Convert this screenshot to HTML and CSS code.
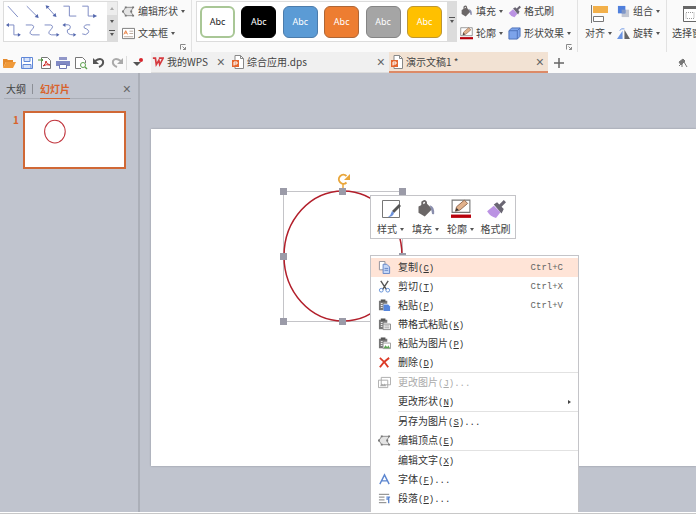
FILE: index.html
```
<!DOCTYPE html>
<html lang="zh-CN">
<head>
    <meta charset="UTF-8">
    <meta name="viewport" content="width=device-width, initial-scale=1.0">
    <title>WPS 演示</title>
    <link rel="stylesheet" href="styles.css">
</head>
<body>
    <!-- Shared icons -->
    <svg class="sprite" aria-hidden="true">
        <symbol id="i-points" viewBox="0 0 14 12">
            <path d="M4 1.5h8L9.5 6l2.500 4.500H4L1 6z" fill="#e4e4e4" stroke="#888"/>
            <path d="M3 .5h2v2H3zM11 .5h2v2h-2zM0 5h2v2H0zM9 5h2v2H9zM3 9.500h2v2H3zM11 9.500h2v2h-2z" fill="#777"/>
        </symbol>
        <symbol id="i-bucket" viewBox="0 0 16 16">
            <path d="M2 6l6-3 5 5-6 6-5-3z" fill="#6b6767"/>
            <path d="M5 7V2.500q2-2 3 0V7" fill="none" stroke="#6b6767" stroke-width="1.500"/>
            <path d="M11 5q4 1 3.500 7-2 1-2-2z" fill="#8b8fae"/>
        </symbol>
        <symbol id="i-brush" viewBox="0 0 18 18">
            <path d="M1 11l6-5 6 6-4 5q-5-1-8-6z" fill="#bb93e3"/>
            <path d="M7 5l3-2 2 2 4-4 2 2-4 4 2 2-2 4z" fill="#6a6673"/>
        </symbol>
        <symbol id="i-outline" viewBox="0 0 18 18">
            <path d="M1 1h16v11H1z" fill="#fff" stroke="#777"/>
            <path d="M4 11l1-4 7-6 3 3-7 6z" fill="#e2b28c" stroke="#8a6149" stroke-width=".8"/>
            <path d="M4 11l1-3 2 2z" fill="#333"/>
            <path d="M0 14h18v3H0z" fill="#b8000c"/>
        </symbol>
        <symbol id="i-ppt" viewBox="0 0 12 14">
            <path d="M3 .5h5.500l3 3v10H3z" fill="#fff" stroke="#888"/>
            <path d="M8.500.5v3h3" fill="none" stroke="#888"/>
            <path d="M0 5h7v7H0z" fill="#e4662f"/>
            <path d="M2 10.500V7h3v2H2" fill="none" stroke="#fff"/>
        </symbol>
        <symbol id="i-paste" viewBox="0 0 14 14">
            <path d="M1 2h9v3H6v7H1z" fill="#777"/>
            <path d="M3 .5h5v2.500H3z" fill="#555"/>
            <path d="M3 5h2M3 7h2M3 9h2" stroke="#fff"/>
        </symbol>
        <symbol id="i-launch" viewBox="0 0 6 6">
            <path d="M.5 5.500v-5h5M2.500 2.500l3 3M5.500 3v2.500H3" fill="none" stroke="#888"/>
        </symbol>
    </svg>

    <header class="ribbon">
        <div class="gallery shapes">
            <svg class="shape-list" viewBox="0 0 104 39" role="img" aria-label="线条">
                <g fill="none" stroke="#7f8dc4">
                    <path d="M4 4l10 11M23 4l11 11M43 4l8 9M60 4h6v10h7M79 4h6v10h6"/>
                    <path d="M4 23h6v10h6M22 23h6q4 1 0 5t1 5h7M41 23h6q4 1 0 5t1 5h6M61 23q6-1 6 2t-3 3q-1 5 6 5M87 23q-7-1-6 3 6 2 4 5-2 3-6 1"/>
                </g>
                <path d="M35 16l-4-1 3-3zM42 3l4 1-3 3zM53 15l-4-1 3-3zM94 14l-4-2v4zM2 23l3-2v4zM17 33l-3-2v4zM56 33l-3-2v4zM59 23l3-2v4zM73 33l-3-2v4z" fill="#5266ad"/>
            </svg>
            <div class="scroller">
                <button aria-label="向上" class="off"><i class="caret up"></i></button>
                <button aria-label="向下"><i class="caret"></i></button>
                <button aria-label="更多"><i class="caret more"></i></button>
            </div>
        </div>

        <div class="group edit">
            <button class="tool"><svg class="icon"><use href="#i-points"/></svg>编辑形状<i class="caret"></i></button>
            <button class="tool">
                <svg class="icon" viewBox="0 0 14 12"><path d="M.5.5h13v11H.5z" fill="#fff" stroke="#777"/><path d="M2 7l2-4 2 4M3 5.500h2" fill="none" stroke="#e87836"/><path d="M8 3.500h4M8 6h4M2 9.500h10" stroke="#b9a79c"/></svg>文本框<i class="caret"></i>
            </button>
            <button class="launch" aria-label="设置"><svg><use href="#i-launch"/></svg></button>
        </div>

        <div class="gallery styles">
            <div class="swatches">
                <button class="swatch white">Abc</button>
                <button class="swatch black">Abc</button>
                <button class="swatch blue">Abc</button>
                <button class="swatch orange">Abc</button>
                <button class="swatch gray">Abc</button>
                <button class="swatch yellow">Abc</button>
            </div>
            <button class="more-styles" aria-label="更多样式"><i class="caret more"></i></button>
        </div>

        <div class="group format">
            <div class="tool-grid">
                <button class="tool"><svg class="icon"><use href="#i-bucket"/></svg>填充<i class="caret"></i></button>
                <button class="tool"><svg class="icon"><use href="#i-brush"/></svg>格式刷</button>
                <button class="tool"><svg class="icon"><use href="#i-outline"/></svg>轮廓<i class="caret"></i></button>
                <button class="tool">
                    <svg class="icon" viewBox="0 0 14 14"><path d="M1 4l3-3h9v9l-3 3H1z" fill="#7ca3ea" stroke="#4c6fb8"/><path d="M1 4h9v9M10 4l3-3" fill="none" stroke="#4c6fb8"/></svg>形状效果<i class="caret"></i>
                </button>
            </div>
            <button class="launch" aria-label="设置"><svg><use href="#i-launch"/></svg></button>
        </div>

        <div class="group arrange">
            <button class="tool tall">
                <svg viewBox="0 0 18 18"><path d="M1.500 0v18" stroke="#777"/><path d="M3 1h15v7H3z" fill="#f2b04a"/><path d="M3.500 11.500h10v5h-10z" fill="#fff" stroke="#777"/></svg>
                <span>对齐<i class="caret"></i></span>
            </button>
            <div>
                <button class="tool">
                    <svg class="icon" viewBox="0 0 14 14"><path d="M5 5h8v8H5z" fill="#c3c7d2"/><path d="M1 1h8v8H1z" fill="#4f7fdc"/><path d="M5 5h4v4H5z" fill="#8096c4"/></svg>组合<i class="caret"></i>
                </button>
                <button class="tool">
                    <svg class="icon" viewBox="0 0 14 14"><path d="M6 4v9H0z" fill="#6b95e4"/><path d="M8 3l6 10H8z" fill="#666"/><path d="M3 4q1-3 5-2" fill="none" stroke="#6b95e4"/></svg>旋转<i class="caret"></i>
                </button>
            </div>
        </div>

        <div class="group select">
            <button class="tool tall">
                <svg viewBox="0 0 18 18"><path d="M.5 1.500h17v15H.5z" fill="#fff" stroke="#666"/><path d="M0 1h18v3H0z" fill="#666"/><path d="M3 7.500h8v6H3z" fill="none" stroke="#999" stroke-dasharray="1"/><path d="M13 9h5v7h-5z" fill="#5c8de0"/></svg>
                <span>选择窗格</span>
            </button>
        </div>
    </header>

    <nav class="tabbar">
        <div class="quick">
            <button aria-label="打开"><svg viewBox="0 0 14 14"><path d="M1 12V3h4l1 1h5v2H4z" fill="#e58a2c"/><path d="M4 6h10l-3 6H1z" fill="#f09a3a"/></svg></button>
            <button aria-label="保存"><svg viewBox="0 0 14 14"><path d="M1.500 1.500h11v11h-11z" fill="#fff" stroke="#5f87d8"/><path d="M4 1.500h6v4H4zM3 8.500h8v4H3z" fill="#d7e3fa" stroke="#5f87d8"/></svg></button>
            <button aria-label="输出为PDF"><svg viewBox="0 0 14 14"><path d="M3.500 1.500h6l3 3v8h-9z" fill="#fff" stroke="#777"/><path d="M5 10q3-2 3-5 0 3 4 4-4-1-7 1z" fill="none" stroke="#d0322e"/><path d="M0 4h5M3 2l2 2-2 2" fill="none" stroke="#579a45"/></svg></button>
            <button aria-label="打印"><svg viewBox="0 0 14 14"><path d="M3 1h8v3H3z" fill="#9298c9"/><path d="M0 5h14v5H0z" fill="#8089c4"/><path d="M3.500 8.500h7v4h-7z" fill="#fff" stroke="#6e76b2"/></svg></button>
            <button aria-label="打印预览"><svg viewBox="0 0 14 14"><path d="M11.500 7V4.500l-3-3h-7v11H7" fill="#fff" stroke="#777"/><circle cx="9" cy="9" r="2.500" fill="#fff" stroke="#5ca04e"/><path d="M11 11l2 2" stroke="#5ca04e" stroke-width="1.500"/></svg></button>
            <button aria-label="撤销"><svg viewBox="0 0 14 14"><path d="M3 5q6-4 8 0 1 4-4 6" fill="none" stroke="#555" stroke-width="2"/><path d="M1 2v6h6z" fill="#555"/></svg></button>
            <button aria-label="恢复"><svg viewBox="0 0 14 14"><path d="M11 5q-6-4-8 0-1 4 4 6" fill="none" stroke="#aaa" stroke-width="2"/><path d="M13 2v6H7z" fill="#aaa"/></svg></button>
        </div>
        <button class="notify" aria-label="更多"><svg viewBox="0 0 14 14"><path d="M1 6h8l-4 4z" fill="#555"/><circle cx="9" cy="4" r="2" fill="#d7262e"/></svg></button>
        <div class="tab home">
            <svg viewBox="0 0 14 12"><path d="M1 1.500h3L5 9l3-5 1 5 4-7.500H8" fill="none" stroke="#d63a3f" stroke-width="2"/></svg>
            <a href="#">我的WPS</a>
            <button class="close" aria-label="关闭">×</button>
        </div>
        <div class="tab doc">
            <svg><use href="#i-ppt"/></svg>
            <a href="#">综合应用.dps</a>
            <button class="close" aria-label="关闭">×</button>
        </div>
        <div class="tab doc active">
            <svg><use href="#i-ppt"/></svg>
            <a href="#">演示文稿1 *</a>
            <button class="close" aria-label="关闭">×</button>
        </div>
        <button class="add" aria-label="新建"><svg viewBox="0 0 10 10"><path d="M5 0v10M0 5h10" stroke="#666" stroke-width="1.500"/></svg></button>
        <button class="skin" aria-label="皮肤"><svg viewBox="0 0 10 10"><path d="M1 4l4-3 2 2-4 4zM4 3v6M6 4l3 5M1 8l2-2" fill="#777" stroke="#777"/></svg></button>
    </nav>

    <main class="workspace">
        <aside class="panel">
            <div class="panel-tabs">
                <a href="#">大纲</a>
                <span class="bar"></span>
                <a href="#" class="current">幻灯片</a>
                <button class="close" aria-label="关闭">×</button>
            </div>
            <div class="thumb-row">
                <span class="number">1</span>
                <div class="thumb">
                    <svg viewBox="0 0 96 52" role="img" aria-label="幻灯片 1"><ellipse cx="29" cy="18" rx="10" ry="11" fill="none" stroke="#c0343c"/></svg>
                </div>
            </div>
        </aside>

        <section class="canvas">
            <div class="slide"></div>
            <svg class="selection" viewBox="0 0 128 154" role="img" aria-label="椭圆">
                <path d="M4.500 20.500h119v130h-119z" fill="none" stroke="#c4c4c8"/>
                <ellipse cx="64" cy="85" rx="59" ry="65" fill="none" stroke="#b21f2b" stroke-width="1.500"/>
                <path d="M64 13v6" stroke="#e9a63b" stroke-width="1.500"/>
                <path d="M67.500 11.500a4.500 4.500 0 1 1 0-6.500" fill="none" stroke="#e9a63b" stroke-width="2"/>
                <path d="M71 3v6h-6z" fill="#e9a63b"/>
                <path d="M1 17h7v7H1zM60 17h7v7h-7zM120 17h7v7h-7zM1 82h7v7H1zM120 82h7v7h-7zM1 147h7v7H1zM60 147h7v7h-7zM120 147h7v7h-7z" fill="#9b9ba8"/>
            </svg>

            <div class="minibar">
                <button>
                    <svg viewBox="0 0 20 20"><path d="M1.500 1.500h17v17h-17z" fill="#fff" stroke="#777"/><path d="M18 5l2 2-7 7-2-2z" fill="#555"/><path d="M11 12l2 2q-1 4-6 4 3-2 4-6z" fill="#6d92dc"/></svg>
                    <span>样式<i class="caret"></i></span>
                </button>
                <button>
                    <svg><use href="#i-bucket"/></svg>
                    <span>填充<i class="caret"></i></span>
                </button>
                <button>
                    <svg><use href="#i-outline"/></svg>
                    <span>轮廓<i class="caret"></i></span>
                </button>
                <button>
                    <svg><use href="#i-brush"/></svg>
                    <span>格式刷</span>
                </button>
            </div>

            <div class="menu">
                <button class="item hover">
                    <svg viewBox="0 0 14 14"><path d="M1.500.5h6v9h-6z" fill="#fff" stroke="#8c8c96"/><path d="M5.500 3.500h4l3 3v7h-7z" fill="#c5d7f7" stroke="#6284c6"/><path d="M7 8h4M7 10h4" stroke="#6284c6"/></svg>
                    <span>复制<kbd>(<u>C</u>)</kbd></span><kbd class="shortcut">Ctrl+C</kbd>
                </button>
                <button class="item">
                    <svg viewBox="0 0 14 14"><path d="M3 1l6 9M11 1L5 10" stroke="#555" stroke-width="1.500"/><circle cx="3.500" cy="11" r="2" fill="none" stroke="#5c8bd6"/><circle cx="10.500" cy="11" r="2" fill="none" stroke="#5c8bd6"/></svg>
                    <span>剪切<kbd>(<u>T</u>)</kbd></span><kbd class="shortcut">Ctrl+X</kbd>
                </button>
                <button class="item">
                    <svg viewBox="0 0 14 14"><use href="#i-paste"/><path d="M6 6h5l2 2v5H6z" fill="#5686dc"/></svg>
                    <span>粘贴<kbd>(<u>P</u>)</kbd></span><kbd class="shortcut">Ctrl+V</kbd>
                </button>
                <button class="item">
                    <svg viewBox="0 0 14 14"><use href="#i-paste"/><path d="M5.500 6.500h8v6h-8z" fill="#eee" stroke="#888"/><path d="M7 8.500h5M7 10.500h5" stroke="#aaa"/></svg>
                    <span>带格式粘贴<kbd>(<u>K</u>)</kbd></span>
                </button>
                <button class="item">
                    <svg viewBox="0 0 14 14"><use href="#i-paste"/><path d="M5.500 6.500h8v6h-8z" fill="#fff" stroke="#999"/><path d="M6 12l2-3 2 2 1-2 2 3z" fill="#5da654"/></svg>
                    <span>粘贴为图片<kbd>(<u>P</u>)</kbd></span>
                </button>
                <button class="item">
                    <svg viewBox="0 0 14 14"><path d="M2 2q5 4 9 10M12 2Q6 6 2 12" fill="none" stroke="#dc3a26" stroke-width="2"/></svg>
                    <span>删除<kbd>(<u>D</u>)</kbd></span>
                </button>
                <hr>
                <button class="item" disabled>
                    <svg viewBox="0 0 14 14"><path d="M3.500 1.500h10v8h-10zM.5 4.500h10v8H.5z" fill="#fff" stroke="#aaa"/><path d="M2 11l2-3 2 2 1-2 2 3z" fill="#aaa"/></svg>
                    <span>更改图片<kbd>(<u>J</u>)...</kbd></span>
                </button>
                <button class="item">
                    <i class="blank"></i>
                    <span>更改形状<kbd>(<u>N</u>)</kbd></span><i class="arrow"></i>
                </button>
                <hr>
                <button class="item">
                    <i class="blank"></i>
                    <span>另存为图片<kbd>(<u>S</u>)...</kbd></span>
                </button>
                <button class="item">
                    <svg><use href="#i-points"/></svg>
                    <span>编辑顶点<kbd>(<u>E</u>)</kbd></span>
                </button>
                <hr>
                <button class="item">
                    <i class="blank"></i>
                    <span>编辑文字<kbd>(<u>X</u>)</kbd></span>
                </button>
                <button class="item">
                    <svg viewBox="0 0 14 14"><path d="M2 12L7 2l5 10M4 8.500h6" fill="none" stroke="#5c86d0" stroke-width="1.500"/></svg>
                    <span>字体<kbd>(<u>F</u>)...</kbd></span>
                </button>
                <button class="item">
                    <svg viewBox="0 0 14 14"><path d="M1 2.500h11M1 5.500h6M1 8.500h6M1 11.500h8" stroke="#777"/><path d="M11.500 5v7M9 5.500h4M9 7.500h2" stroke="#5c86d0" stroke-width="1.500"/></svg>
                    <span>段落<kbd>(<u>P</u>)...</kbd></span>
                </button>
            </div>
        </section>
    </main>
    <footer class="status"></footer>
</body>
</html>
```
FILE: styles.css
```
* {
    margin: 0;
    padding: 0;
    box-sizing: border-box;
}

body {
    font-family: "Noto Sans CJK SC", sans-serif;
    font-size: 10px;
    line-height: 14px;
    color: #444;
    background: #fff;
    height: 100vh;
    display: flex;
    flex-direction: column;
    overflow: hidden;
}

button {
    font: inherit;
    color: inherit;
    background: none;
    border: none;
    cursor: pointer;
}

a {
    color: inherit;
    text-decoration: none;
}

svg {
    display: block;
    flex: none;
}

.sprite {
    position: absolute;
    width: 0;
    height: 0;
}

.caret {
    display: inline-block;
    border: 2px solid transparent;
    border-top: 3px solid #555;
    border-bottom: none;
    flex: none;
}

.caret.up {
    transform: rotate(180deg);
}

.caret.more {
    position: relative;
}

.caret.more::before {
    content: '';
    position: absolute;
    left: -3px;
    top: -6px;
    width: 6px;
    height: 1px;
    background: #555;
}

/* Ribbon */
.ribbon {
    display: flex;
    align-items: flex-start;
    height: 52px;
    flex: none;
    background: #fafafa;
    overflow: hidden;
    white-space: nowrap;
}

.gallery {
    display: flex;
    flex: none;
    height: 41px;
    margin-top: 1px;
    background: #fff;
    border: 1px solid #dcdcdc;
}

.shapes {
    width: 115px;
    margin-left: 3px;
}

.shape-list {
    flex: 1;
    height: 39px;
}

.scroller {
    display: grid;
    width: 10px;
}

.scroller button,
.more-styles {
    display: flex;
    align-items: center;
    justify-content: center;
    background: #dcdcdc;
}

.scroller .off {
    opacity: 0.5;
}

.group {
    display: flex;
    flex: none;
    height: 52px;
    border-right: 1px solid #e2e2e2;
}

.edit {
    flex-direction: column;
    width: 74px;
    padding-left: 4px;
}

.tool {
    display: flex;
    align-items: center;
    height: 22px;
    gap: 3px;
}

.icon {
    width: 13px;
    height: 13px;
}

.launch {
    align-self: flex-end;
    margin-right: 5px;
}

.launch svg {
    width: 6px;
    height: 6px;
}

.styles {
    width: 261px;
    margin-left: 4px;
}

.swatches {
    flex: 1;
    display: flex;
    align-items: center;
    justify-content: space-between;
    padding: 0 5px 0 3px;
}

.swatch {
    width: 35px;
    height: 32px;
    border-radius: 6px;
    border: 1px solid;
    color: #fff;
    font-family: "Noto Sans", sans-serif;
    font-size: 9px;
}

.white {
    color: #222;
    background: #fff;
    border: 2px solid #a9c796;
}

.black {
    background: #000;
    border-color: #000;
}

.blue {
    background: #5b9bd5;
    border-color: #4c7cab;
}

.orange {
    background: #ed7d31;
    border-color: #ae6636;
}

.gray {
    background: #a5a5a5;
    border-color: #858585;
}

.yellow {
    background: #ffc000;
    border-color: #bd9631;
}

.more-styles {
    width: 9px;
}

.format {
    flex-direction: column;
    width: 121px;
    padding-left: 3px;
}

.tool-grid {
    display: grid;
    grid-template-columns: 48px 1fr;
}

.arrange {
    width: 89px;
    padding-left: 7px;
    gap: 5px;
}

.tall {
    flex-direction: column;
    height: auto;
    padding-top: 5px;
    gap: 3px;
}

.tall svg {
    width: 18px;
    height: 18px;
}

.tall span {
    display: flex;
    align-items: center;
    gap: 3px;
}

.select {
    padding-left: 5px;
}

/* Quick access and document tabs */
.tabbar {
    display: flex;
    align-items: center;
    height: 21px;
    flex: none;
    background: #fafafa;
    overflow: hidden;
    white-space: nowrap;
}

.quick {
    display: flex;
    gap: 4px;
    padding: 0 2px;
    border-right: 1px solid #ddd;
}

.quick svg,
.notify svg {
    width: 14px;
    height: 14px;
}

.notify {
    padding: 0 5px;
}

.tab {
    display: flex;
    align-items: center;
    gap: 3px;
    height: 21px;
    background: #f0f0f0;
    border-bottom: 1px solid #ddd;
}

.home {
    width: 79px;
    padding: 0 5px 0 1px;
}

.home svg {
    width: 12px;
    height: 12px;
}

.doc {
    width: 159px;
    padding: 0 4px 0 2px;
}

.doc svg {
    width: 12px;
    height: 14px;
}

.active {
    background: #f2e2d3;
    border-bottom: 2px solid #dc8a67;
}

.close {
    margin-left: auto;
    font-family: "Liberation Sans", sans-serif;
    font-size: 14px;
    color: #666;
}

.add {
    padding: 0 6px;
}

.add svg,
.skin svg {
    width: 10px;
    height: 10px;
}

.skin {
    margin-left: auto;
    padding-right: 8px;
}

/* Workspace */
.workspace {
    flex: 1;
    min-height: 0;
    display: flex;
    background: #c0c4ce;
}

.panel {
    width: 140px;
    flex: none;
    padding: 6px 7px 0 4px;
    border-right: 2px solid #abafb8;
}

.panel-tabs {
    display: flex;
    align-items: center;
    height: 20px;
    padding-left: 2px;
    border-bottom: 1px solid #a9adb6;
}

.bar {
    width: 1px;
    height: 10px;
    margin: 0 7px 0 6px;
    background: #8c8f96;
}

.current {
    height: 20px;
    line-height: 20px;
    color: #d9622b;
    font-weight: bold;
    border-bottom: 1px solid #d9622b;
}

.thumb-row {
    display: flex;
    gap: 5px;
    padding: 12px 0 0 9px;
}

.number {
    width: 5px;
    line-height: 18px;
    color: #d9622b;
    font-weight: bold;
}

.thumb {
    flex: 1;
    max-width: 103px;
    background: #fff;
    border: 2px solid #d06835;
}

.thumb svg {
    width: 100%;
}

.canvas {
    flex: 1;
    min-width: 0;
    position: relative;
    display: flex;
    padding: 56px 0 46px 11px;
    overflow: hidden;
}

.slide {
    flex: 1;
    background: #fff;
    box-shadow: 0 0 2px #8f939d;
}

.selection {
    position: absolute;
    left: 139px;
    top: 98px;
    width: 128px;
    height: 154px;
}

.minibar {
    position: absolute;
    left: 230px;
    top: 122px;
    display: flex;
    height: 44px;
    padding: 0 2px;
    background: #fff;
    border: 1px solid #c4c4c8;
}

.minibar button {
    display: flex;
    flex-direction: column;
    align-items: center;
    width: 35px;
    padding-top: 3px;
    gap: 3px;
}

.minibar svg {
    width: 20px;
    height: 20px;
}

.minibar span {
    display: flex;
    align-items: center;
    gap: 3px;
    white-space: nowrap;
}

/* Context menu */
.menu {
    position: absolute;
    left: 230px;
    top: 182px;
    bottom: 0;
    width: 209px;
    padding-top: 2px;
    background: #fff;
    border: 1px solid #c4c4c8;
    border-bottom: none;
    overflow: hidden;
}

.item {
    display: flex;
    align-items: center;
    width: 100%;
    height: 19px;
    padding: 0 15px 0 7px;
    color: #333;
    text-align: left;
}

.item svg,
.blank {
    width: 13px;
    height: 13px;
    margin-right: 7px;
}

.item:disabled {
    color: #aaa;
}

.hover {
    background: #ffe4d7;
}

kbd {
    font-family: "Liberation Mono", monospace;
    font-size: 9px;
}

.shortcut {
    margin-left: auto;
    color: #666;
}

.arrow {
    margin-left: auto;
    margin-right: -8px;
    border: 2px solid transparent;
    border-left: 3px solid #444;
    border-right: none;
}

hr {
    margin-left: 27px;
    border: none;
    border-top: 1px solid #e2e2e2;
}

.status {
    height: 5px;
    flex: none;
    border-top: 1px solid #fff;
    background: linear-gradient(#c8c8c8 1px, #fff 1px);
}
```
